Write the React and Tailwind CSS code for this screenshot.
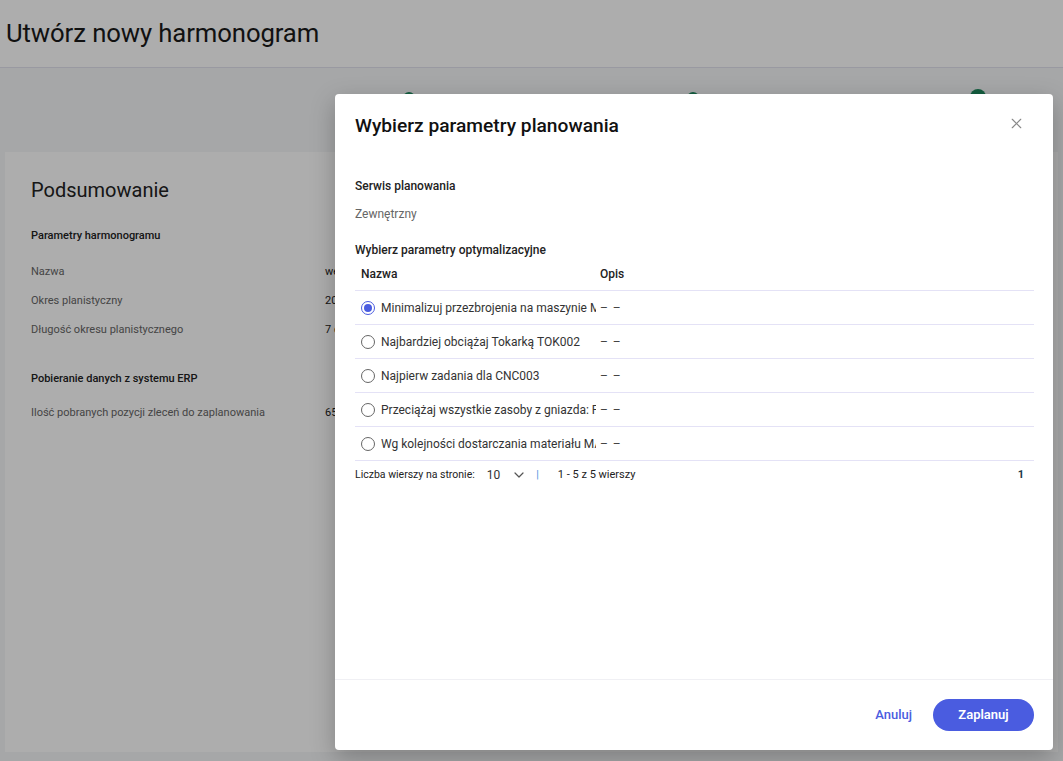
import { X, ChevronDown } from "lucide-react";

const summaryRows = [
  ["Nazwa", "wersja 1"],
  ["Okres planistyczny", "2024-05-06 - 2024-05-12"],
  ["Długość okresu planistycznego", "7 dni"],
];

const options = [
  "Minimalizuj przezbrojenia na maszynie MAG001",
  "Najbardziej obciążaj Tokarką TOK002",
  "Najpierw zadania dla CNC003",
  "Przeciążaj wszystkie zasoby z gniazda: Frezarki",
  "Wg kolejności dostarczania materiału MAT01",
];

const Radio = ({ checked }) => (
  <span
    className={
      "flex h-[14px] w-[14px] flex-none items-center justify-center rounded-full border " +
      (checked ? "border-[#4a5ce0]" : "border-[#666]")
    }
  >
    {checked ? <span className="h-[8px] w-[8px] rounded-full bg-[#4a5ce0]" /> : null}
  </span>
);

export default function App() {
  return (
    <div className="relative h-[761px] w-full overflow-hidden bg-[#f5f6f8] font-['Roboto',sans-serif] text-[#1a1a1a]">
      {/* page behind the dialog */}
      <header className="flex h-[68px] items-center border-b border-[#e2e2ee] bg-white px-[6px]">
        <h1 className="text-[25.7px] font-normal leading-none tracking-[-0.1px]">Utwórz nowy harmonogram</h1>
      </header>

      <div className="flex h-[84px] items-start pt-[24px]">
        <div className="ml-[403px] h-[12px] w-[12px] rounded-full bg-[#1e8a5e]" />
        <div className="ml-[272px] h-[12px] w-[12px] rounded-full bg-[#1e8a5e]" />
        <div className="ml-[271px] mt-[-3px] h-[16px] w-[16px] rounded-full bg-[#1e8a5e]" />
      </div>

      <section className="ml-[5px] mr-[5px] h-[600px] bg-white px-[26px] pt-[26px]">
        <h2 className="text-[20px] font-normal leading-[24px] text-[#222]">Podsumowanie</h2>
        <h3 className="mt-[26px] text-[11px] font-medium text-[#222]">Parametry harmonogramu</h3>
        <div className="mt-[19px] flex flex-col gap-[12px]">
          {summaryRows.map(([k, v]) => (
            <div key={k} className="flex h-[17px] items-center text-[11px]">
              <span className="w-[294px] text-[#666]">{k}</span>
              <span className="text-[#222]">{v}</span>
            </div>
          ))}
        </div>
        <h3 className="mt-[32px] text-[11px] font-medium text-[#222]">Pobieranie danych z systemu ERP</h3>
        <div className="mt-[18px] flex h-[17px] items-center text-[11px]">
          <span className="w-[294px] text-[#666]">Ilość pobranych pozycji zleceń do zaplanowania</span>
          <span className="text-[#222]">65</span>
        </div>
      </section>

      {/* overlay */}
      <div className="absolute inset-0 bg-black/[0.32]" />

      {/* dialog */}
      <div className="absolute right-[10px] top-[94px] flex h-[656px] w-[718px] flex-col rounded-[4px] bg-white shadow-[0_8px_24px_rgba(0,0,0,0.25)]">
        <div className="flex items-start justify-between pl-[20px] pr-[28px] pt-[20px]">
          <h2 className="text-[19.2px] font-medium leading-[24px] text-[#111]">Wybierz parametry planowania</h2>
          <X className="mt-[1px] h-[17px] w-[17px] text-[#888]" strokeWidth={1.6} />
        </div>

        <div className="flex-1 px-[20px] pt-[40px]">
          <div className="text-[12px] font-medium leading-[16px] text-[#222]">Serwis planowania</div>
          <div className="mt-[12px] text-[12px] leading-[16px] text-[#666]">Zewnętrzny</div>
          <div className="mt-[20px] text-[12px] font-medium leading-[16px] text-[#222]">Wybierz parametry optymalizacyjne</div>

          <div className="mr-[-1px]">
            <div className="flex h-[33px] items-center border-b border-[#e4e2f6] text-[12px] font-medium text-[#222]">
              <span className="w-[245px] pl-[6px]">Nazwa</span>
              <span>Opis</span>
            </div>
            {options.map((o, i) => (
              <div key={o} className="flex h-[34px] items-center border-b border-[#e4e2f6] text-[12px] text-[#333]">
                <div className="flex w-[241px] flex-none items-center gap-[6px] overflow-hidden pl-[6px]">
                  <Radio checked={i === 0} />
                  <span className="min-w-0 flex-1 overflow-hidden whitespace-nowrap">{o}</span>
                </div>
                <span className="ml-[4px] tracking-[1px] text-[#444]">– –</span>
              </div>
            ))}
            <div className="flex h-[28px] items-center text-[10.5px] text-[#222]">
              <span>Liczba wierszy na stronie:</span>
              <span className="ml-[12px] text-[12px] text-[#333]">10</span>
              <ChevronDown className="ml-[11px] h-[16px] w-[16px] text-[#555]" strokeWidth={1.8} />
              <span className="ml-[9px] text-[#4a8fe0]">|</span>
              <span className="ml-[19px] text-[11px]">1 - 5 z 5 wierszy</span>
              <span className="ml-auto mr-[10px] text-[11px] font-bold text-[#1b3a4a]">1</span>
            </div>
          </div>
        </div>

        <div className="flex h-[71px] items-center justify-end gap-[21px] border-t border-[#f0f0f4] pr-[19px]">
          <button className="text-[13px] font-medium text-[#4a5ce0]">Anuluj</button>
          <button className="h-[32px] w-[101px] rounded-full bg-[#4a5ce0] text-[13px] font-semibold text-white">Zaplanuj</button>
        </div>
      </div>
    </div>
  );
}
